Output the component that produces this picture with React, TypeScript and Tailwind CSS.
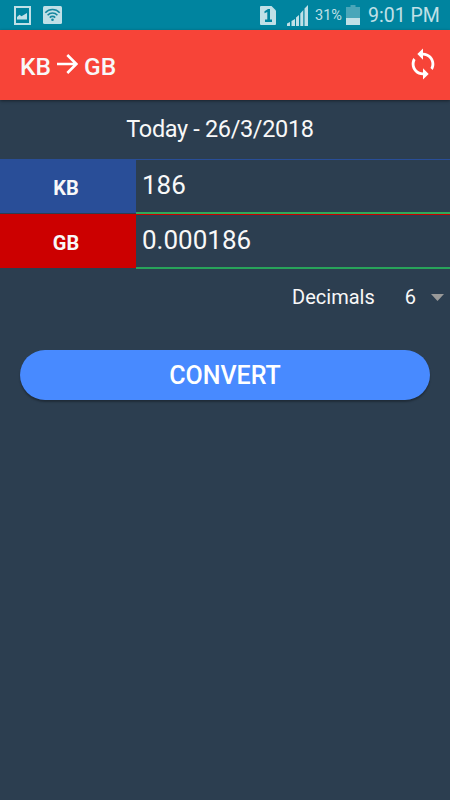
import React from "react";

function StatusBar() {
  return (
    <header className="flex h-[30px] shrink-0 items-center bg-[#00849f] pl-[14px] pr-[11px] text-[#c0e0e7]">
      <svg className="h-[19px] w-[17px] shrink-0" viewBox="0 0 17 19" fill="none">
        <path d="M1 1h15v17H1z" stroke="currentColor" strokeWidth="2" />
        <path d="M3 13.500V11l2.500-2.200 2 1.400L13 7v6.500z" fill="currentColor" />
      </svg>
      <svg className="ml-3 h-[18px] w-[19px] shrink-0" viewBox="0 0 19 18" fill="none">
        <rect width="19" height="18" rx="1.500" fill="currentColor" />
        <g stroke="#1487a0" strokeWidth="1.600">
          <path d="M2.300 6.700c4-4.300 10.400-4.300 14.400 0" />
          <path d="M4.600 9.200c2.700-2.900 7.100-2.900 9.800 0" />
          <path d="M6.800 11.600c1.500-1.600 3.900-1.600 5.400 0" />
        </g>
        <circle cx="9.500" cy="13.700" r="1.300" fill="#1487a0" />
      </svg>
      <svg className="ml-auto h-[19px] w-[16px] shrink-0" viewBox="0 0 16 19">
        <path d="M1 0h10.500L16 4.500V18a1 1 0 0 1-1 1H1a1 1 0 0 1-1-1V1a1 1 0 0 1 1-1z" fill="currentColor" />
        <path d="M4.500 5.300L8 3h2v10.500h2V16H5v-2.500h2.300V6L4.500 7.300z" fill="#00849f" />
      </svg>
      <svg className="ml-[11px] h-[21px] w-[21px] shrink-0" viewBox="0 0 21 21" fill="currentColor">
        <path d="M0 18.500L3 17v4H0zM4.500 16L8 14v7H4.500zM9 12.500l3-2.500v11H9zM13.300 8.500L16.300 5v16h-3zM17.500 3.500L21 0v21h-3.500z" />
      </svg>
      <span className="ml-[7px] w-[27px] whitespace-nowrap pt-[2px] text-[14.500px] leading-[18px]">31%</span>
      <svg className="ml-1 h-[20px] w-[14px] shrink-0" viewBox="0 0 14 20">
        <path d="M4.500 0h5v2H14v18H0V2h4.500z" fill="#49a6b9" />
        <path d="M0 13h14v7H0z" fill="currentColor" />
      </svg>
      <span className="ml-[8px] w-[71px] whitespace-nowrap pt-[1px] text-[19.500px] leading-[24px]">9:01 PM</span>
    </header>
  );
}

function TitleBar() {
  return (
    <div className="z-10 flex h-[70px] shrink-0 items-center bg-[#f74438] pl-[20px] pr-[10px] shadow-[0_1px_3px_rgba(0,0,0,0.45)]">
      <h1 className="flex items-center text-[24.500px] font-medium leading-[28px]">
        <span className="pt-[4px]">KB</span>
        <svg className="mb-[2px] ml-[6px] mr-[6px] h-[20px] w-[21px]" viewBox="0 0 21 20" fill="none" stroke="white" strokeWidth="2.600">
          <path d="M0 10h19M10.300 1l9 9-9 9" />
        </svg>
        <span className="pt-[4px]">GB</span>
      </h1>
      <button aria-label="Swap units" className="mb-[2px] ml-auto">
        <svg className="h-[34px] w-[34px]" viewBox="0 0 24 24" fill="white">
          <path d="M12 4V1L8 5l4 4V6c3.310 0 6 2.690 6 6 0 1.010-.250 1.970-.700 2.800l1.460 1.460C19.540 15.030 20 13.570 20 12c0-4.420-3.580-8-8-8zm0 14c-3.310 0-6-2.690-6-6 0-1.010.250-1.970.700-2.800L5.240 7.740C4.460 8.970 4 10.430 4 12c0 4.420 3.580 8 8 8v3l4-4-4-4v3z" />
        </svg>
      </button>
    </div>
  );
}

export default function App() {
  return (
    <div className="flex h-[800px] w-[450px] flex-col overflow-hidden bg-[#2c3e50] font-['Roboto',sans-serif] text-[#f8f8f8]">
      <StatusBar />
      <TitleBar />
      <p className="flex h-[59px] items-center justify-center pb-[1px] pr-[10px] text-[23.500px] leading-[28px] tracking-[-0.350px]">Today - 26/3/2018</p>
      <div className="flex h-[55px] border-t border-[#294e98]">
        <div className="mb-px flex w-[136px] items-center justify-center bg-[#294e98] pr-[4px] pt-[2px] text-[20px] font-bold">KB</div>
        <div className="flex flex-1 items-center border-b-2 border-[#32a95b] pb-[2px] pl-[6px] text-[26px]">186</div>
      </div>
      <div className="flex h-[55px] border-t border-[#cc0000]">
        <div className="mb-px flex w-[136px] items-center justify-center bg-[#cc0000] pr-[4px] pt-[2px] text-[20px] font-bold">GB</div>
        <div className="flex flex-1 items-center border-b-2 border-[#28a35a] pb-[2px] pl-[6px] text-[26px]">0.000186</div>
      </div>
      <div className="flex h-[56px] items-center justify-end pr-[6px] text-[20px]">
        <span>Decimals</span>
        <span className="ml-[30px]">6</span>
        <svg className="ml-[15px] h-[7px] w-[13px]" viewBox="0 0 13 7" fill="#999999">
          <path d="M0 0h13L6.500 7z" />
        </svg>
      </div>
      <button className="mx-[20px] mt-[25px] h-[50px] rounded-full bg-[#488aff] pt-[1px] text-[25px] font-medium text-white shadow-[0_2px_2px_rgba(0,0,0,0.3)]">
        CONVERT
      </button>
    </div>
  );
}
